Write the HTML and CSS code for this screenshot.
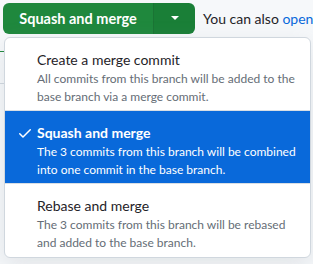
FILE: index.html
```html
<!DOCTYPE html>
<html>
<head>
<meta charset="utf-8">
<link rel="stylesheet" href="styles.css">
</head>
<body>
<div class="bar">
  <div class="btn-group">
    <button class="btn main">Squash and merge</button>
    <button class="btn caret"><span class="tri"></span></button>
  </div>
  <span class="also">You can also <a class="link">open this in GitHub Desktop</a></span>
</div>
<div class="lines">
  <div class="l1"></div>
  <div class="l2"></div>
</div>
<div class="menu">
  <div class="item">
    <div class="check"></div>
    <div class="body">
      <div class="title">Create a merge commit</div>
      <div class="desc">All commits from this branch will be added to the base branch via a merge commit.</div>
    </div>
  </div>
  <div class="item selected">
    <div class="check"><svg width="16" height="16" viewBox="0 0 16 16"><path fill="#fff" d="M13.78 4.22a.75.75 0 0 1 0 1.06l-7.25 7.25a.75.75 0 0 1-1.06 0L2.22 9.28a.751.751 0 0 1 .018-1.042.751.751 0 0 1 1.042-.018L6 10.94l6.72-6.72a.75.75 0 0 1 1.06 0Z"/></svg></div>
    <div class="body">
      <div class="title">Squash and merge</div>
      <div class="desc">The 3 commits from this branch will be combined into one commit in the base branch.</div>
    </div>
  </div>
  <div class="item">
    <div class="check"></div>
    <div class="body">
      <div class="title">Rebase and merge</div>
      <div class="desc">The 3 commits from this branch will be rebased and added to the base branch.</div>
    </div>
  </div>
</div>
</body>
</html>
```
FILE: styles.css
```css
html, body {
  margin: 0;
  padding: 0;
}
body {
  background: #f6f8fa;
  width: 313px;
  height: 264px;
  overflow: hidden;
  font-family: "Lato", "Noto Sans", sans-serif;
  color: #1f2328;
  position: relative;
}
.bar {
  display: flex;
  align-items: center;
  padding: 2px 0 0 3px;
  height: 32px;
  white-space: nowrap;
  overflow: hidden;
}
.btn-group {
  display: flex;
  height: 31px;
  flex: none;
}
.btn {
  border: 0;
  background: #1f883d;
  color: #fff;
  font-family: inherit;
  font-weight: 700;
  font-size: 14.5px;
  margin: 0;
  cursor: pointer;
}
.main {
  width: 151px;
  border-radius: 6px 0 0 6px;
  border-right: 1px solid #1a7434;
  padding: 0;
}
.caret {
  width: 41px;
  border-radius: 0 6px 6px 0;
  background: #1a7f37;
  display: flex;
  align-items: center;
  justify-content: center;
}
.tri {
  width: 0;
  height: 0;
  border-left: 4px solid transparent;
  border-right: 4px solid transparent;
  border-top: 4px solid #fff;
}
.also {
  margin-left: 8px;
  font-size: 14px;
}
.link {
  color: #0969da;
}
.lines {
  position: absolute;
  left: 0;
  top: 0;
  width: 4px;
  height: 264px;
}
.l1 {
  position: absolute;
  top: 51px;
  left: 0;
  width: 4px;
  height: 1px;
  background: #1f883d;
}
.l2 {
  position: absolute;
  top: 83px;
  left: 0;
  width: 4px;
  height: 1px;
  background: #d0d7de;
}
.menu {
  position: absolute;
  left: 4px;
  top: 37px;
  width: 305px;
  background: #fff;
  border: 1px solid #d0d7de;
  border-radius: 6px;
  box-shadow: 0 8px 24px rgba(140,149,159,0.2);
  overflow: hidden;
}
.item {
  display: flex;
  height: 73px;
  box-sizing: border-box;
  border-bottom: 1px solid #d8dee4;
  padding: 12px 10px 0 12px;
}
.item:last-child {
  border-bottom: 0;
}
.check {
  width: 16px;
  flex: none;
  margin-right: 2px;
  padding-top: 2px;
}
.body {
  padding-left: 2px;
}
.title {
  font-size: 14px;
  line-height: 20px;
  color: #1f2328;
}
.desc {
  font-size: 12px;
  line-height: 18px;
  color: #656d76;
}
.selected {
  background: #0969da;
}
.selected .title {
  color: #fff;
  font-weight: 700;
}
.selected .desc {
  color: #fff;
}
```
